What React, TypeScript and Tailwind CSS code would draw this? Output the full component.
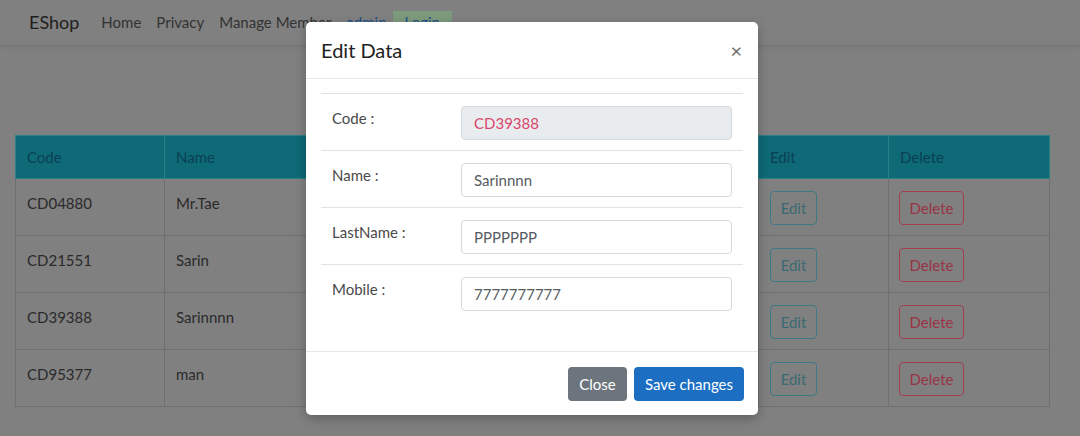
import React from "react";

const rows = [
  { code: "CD04880", name: "Mr.Tae" },
  { code: "CD21551", name: "Sarin" },
  { code: "CD39388", name: "Sarinnnn" },
  { code: "CD95377", name: "man" },
];

function Field({ label, value, readOnly }: { label: string; value: string; readOnly?: boolean }) {
  return (
    <div className="flex h-[57px] border-t border-[#e2e2e2] px-[11px] pt-[12px]">
      <div className="w-[129px] shrink-0 text-[15px] leading-[24px] text-[#4a4a4a]">{label}</div>
      <div
        className={
          "flex h-[34px] flex-1 items-center rounded-[4px] border border-[#d6d9dc] px-[12px] text-[15px] " +
          (readOnly ? "bg-[#e9ecef] text-[#d9486a]" : "bg-white text-[#555b60]")
        }
      >
        {value}
      </div>
    </div>
  );
}

export default function App() {
  return (
    <div className="relative h-[436px] w-[1080px] overflow-hidden bg-[#808080] font-['Lato','Liberation_Sans',sans-serif] text-[#2a2a2a]">
      {/* Navbar */}
      <div className="flex h-[46px] items-center border-b border-[#747474] pl-[29px] shadow-[0_2px_4px_rgba(0,0,0,0.06)]">
        <span className="mr-[22px] text-[18px] text-[#1e1e1e]">EShop</span>
        <nav className="flex items-center text-[15px] text-[#333]">
          <span className="mr-[15px]">Home</span>
          <span className="mr-[15px]">Privacy</span>
          <span className="mr-[15px]">Manage Member</span>
          <span className="mr-[6px] text-[#1f4f86]">admin</span>
          <span className="bg-[#7c9a7c] px-[12px] text-[#1f4f86]">Login</span>
        </nav>
      </div>

      {/* Table */}
      <div className="px-[15px] pt-[89px]">
        <table className="w-[1034px] table-fixed border-collapse text-[15px]">
          <thead>
            <tr className="h-[43px] bg-[#0e6a76] text-left text-[#0b3f55]">
              <th className="w-[149px] border border-[#2a7f89] px-[11px] font-normal">Code</th>
              <th className="w-[199px] border border-[#2a7f89] px-[11px] font-normal">Name</th>
              <th className="w-[199px] border border-[#2a7f89] px-[11px] font-normal">LastName</th>
              <th className="w-[196px] border border-[#2a7f89] px-[11px] font-normal">Mobile</th>
              <th className="w-[130px] border border-[#2a7f89] px-[11px] font-normal">Edit</th>
              <th className="w-[161px] border border-[#2a7f89] px-[11px] font-normal">Delete</th>
            </tr>
          </thead>
          <tbody>
            {rows.map((r) => (
              <tr key={r.code} className="h-[57px] align-top">
                <td className="border border-[#6f6f6f] px-[11px] pt-[12px] leading-[24px]">{r.code}</td>
                <td className="border border-[#6f6f6f] px-[11px] pt-[12px] leading-[24px]">{r.name}</td>
                <td className="border border-[#6f6f6f] px-[11px] pt-[12px] leading-[24px]"></td>
                <td className="border border-[#6f6f6f] px-[11px] pt-[12px] leading-[24px]"></td>
                <td className="border border-[#6f6f6f] px-[11px] pt-[12px]">
                  <span className="inline-flex h-[34px] w-[47px] items-center justify-center rounded-[4px] border border-[#3d7a86] text-[#3b6a72]">
                    Edit
                  </span>
                </td>
                <td className="border border-[#6f6f6f] px-[10px] pt-[12px]">
                  <span className="inline-flex h-[34px] w-[65px] items-center justify-center rounded-[4px] border border-[#a0404e] text-[#9a3445]">
                    Delete
                  </span>
                </td>
              </tr>
            ))}
          </tbody>
        </table>
      </div>

      {/* Modal */}
      <div className="absolute inset-0 pl-[306px] pt-[22px]">
        <div className="h-[393px] w-[452px] overflow-hidden rounded-[5px] bg-white shadow-[0_4px_12px_rgba(0,0,0,0.25)]">
          <div className="flex h-[57px] items-center justify-between border-b border-[#e6e6e6] pl-[15px] pr-[16px]">
            <span className="text-[20px] text-[#222]">Edit Data</span>
            <span className="text-[20px] leading-none text-[#6a6a6a]">×</span>
          </div>
          <div className="h-[272px] px-[15px] pt-[14px]">
            <Field label="Code :" value="CD39388" readOnly />
            <Field label="Name :" value="Sarinnnn" />
            <Field label="LastName :" value="PPPPPPP" />
            <Field label="Mobile :" value="7777777777" />
          </div>
          <div className="flex h-[64px] items-start justify-end gap-[7px] border-t border-[#e6e6e6] pr-[14px] pt-[15px]">
            <span className="inline-flex h-[34px] w-[59px] items-center justify-center rounded-[4px] bg-[#6c757d] text-[15px] text-white">
              Close
            </span>
            <span className="inline-flex h-[34px] w-[110px] items-center justify-center rounded-[4px] bg-[#1b6ec2] text-[15px] text-white">
              Save changes
            </span>
          </div>
        </div>
      </div>
    </div>
  );
}
